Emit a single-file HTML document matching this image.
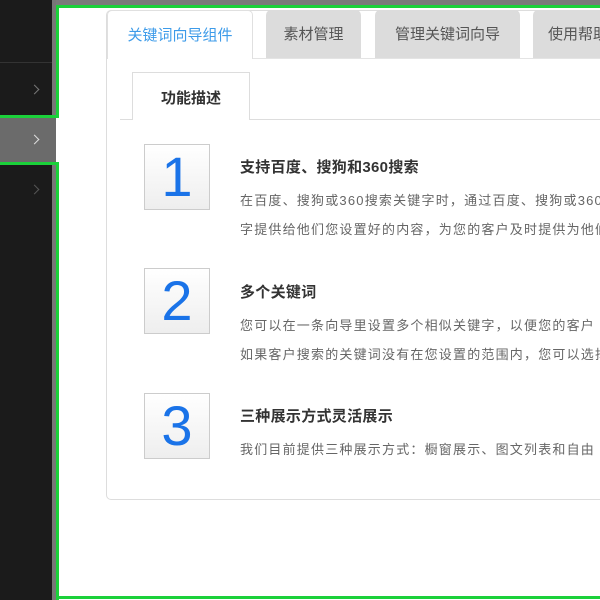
<!DOCTYPE html>
<html><head><meta charset="utf-8"><style>
*{margin:0;padding:0;box-sizing:border-box}
html,body{width:600px;height:600px;overflow:hidden;background:#fff}
body{font-family:"Liberation Sans","Microsoft YaHei","Noto Sans CJK SC",sans-serif}
#w{position:relative;width:600px;height:600px;overflow:hidden}
.a{position:absolute}
.chev{position:absolute;left:31px;width:7px;height:7px;border-right:1.5px solid #777;border-top:1.5px solid #777;transform:rotate(45deg)}
.tab{position:absolute;top:10px;height:48px;background:#dcdcdc;border-radius:5px 5px 0 0;color:#555;font-size:15px;text-align:center;line-height:50px;white-space:nowrap;overflow:hidden}
.num{position:absolute;left:144px;width:66px;height:66px;border:1px solid #ccc;background:linear-gradient(#fff,#eee);color:#1a73e8;font-size:56px;text-align:center;line-height:64px;font-family:"Liberation Sans",sans-serif}
.h{position:absolute;left:240px;font-size:15px;font-weight:bold;color:#333;white-space:nowrap;letter-spacing:0.3px}
.p{position:absolute;left:240px;width:360px;overflow:hidden;font-size:13px;color:#666;white-space:nowrap;line-height:29px;letter-spacing:1.2px}
</style></head><body><div id="w">
<div class="a" style="left:0;top:0;width:600px;height:5px;background:#7a7a7a"></div>
<div class="a" style="left:0;top:0;width:52px;height:600px;background:#1b1b1b"></div>
<div class="a" style="left:52px;top:0;width:4px;height:600px;background:#777"></div>
<div class="a" style="left:0;top:62px;width:52px;height:1px;background:#333"></div>
<div class="a" style="left:0;top:117px;width:56px;height:46px;background:#6b6b6b"></div>
<div class="chev" style="top:86px"></div>
<div class="chev" style="top:136px;border-color:#ddd"></div>
<div class="chev" style="top:186px;border-color:#555"></div>
<div class="a" style="left:56px;top:5px;width:544px;height:3px;background:#1bd13a"></div>
<div class="a" style="left:56px;top:5px;width:3px;height:113px;background:#1bd13a"></div>
<div class="a" style="left:0;top:115px;width:59px;height:3px;background:#1bd13a;border-radius:0 0 4px 0"></div>
<div class="a" style="left:0;top:162px;width:59px;height:3px;background:#1bd13a;border-radius:0 4px 0 0"></div>
<div class="a" style="left:56px;top:162px;width:3px;height:438px;background:#1bd13a"></div>
<div class="a" style="left:56px;top:596px;width:544px;height:3px;background:#1bd13a"></div>
<div class="a" style="left:106px;top:10px;width:510px;height:490px;border:1px solid #ddd;border-radius:5px"></div>
<div class="a" style="left:107px;top:58px;width:493px;height:1px;background:#e4e4e4"></div>
<div class="tab" style="left:107px;width:146px;background:#fff;color:#3d9be9;border:1px solid #e0e0e0;border-bottom:none;height:49px">关键词向导组件</div>
<div class="tab" style="left:266px;width:95px">素材管理</div>
<div class="tab" style="left:375px;width:145px">管理关键词向导</div>
<div class="tab" style="left:533px;width:67px;text-align:left;padding-left:15px;border-radius:5px 0 0 0">使用帮助</div>
<div class="a" style="left:120px;top:119px;width:480px;height:1px;background:#ddd"></div>
<div class="a" style="left:132px;top:72px;width:118px;height:48px;border:1px solid #ddd;border-bottom:none;background:#fff;font-size:15px;font-weight:bold;color:#333;text-align:center;line-height:52px">功能描述</div>
<div class="num" style="top:144px">1</div>
<div class="num" style="top:268px">2</div>
<div class="num" style="top:393px">3</div>
<div class="h" style="top:156px">支持百度、搜狗和360搜索</div>
<div class="p" style="top:186px">在百度、搜狗或360搜索关键字时，通过百度、搜狗或360搜索<br>字提供给他们您设置好的内容，为您的客户及时提供为他们</div>
<div class="h" style="top:281px">多个关键词</div>
<div class="p" style="top:311px">您可以在一条向导里设置多个相似关键字，以便您的客户<br>如果客户搜索的关键词没有在您设置的范围内，您可以选择</div>
<div class="h" style="top:405px">三种展示方式灵活展示</div>
<div class="p" style="top:435px">我们目前提供三种展示方式：橱窗展示、图文列表和自由</div>
</div></body></html>
